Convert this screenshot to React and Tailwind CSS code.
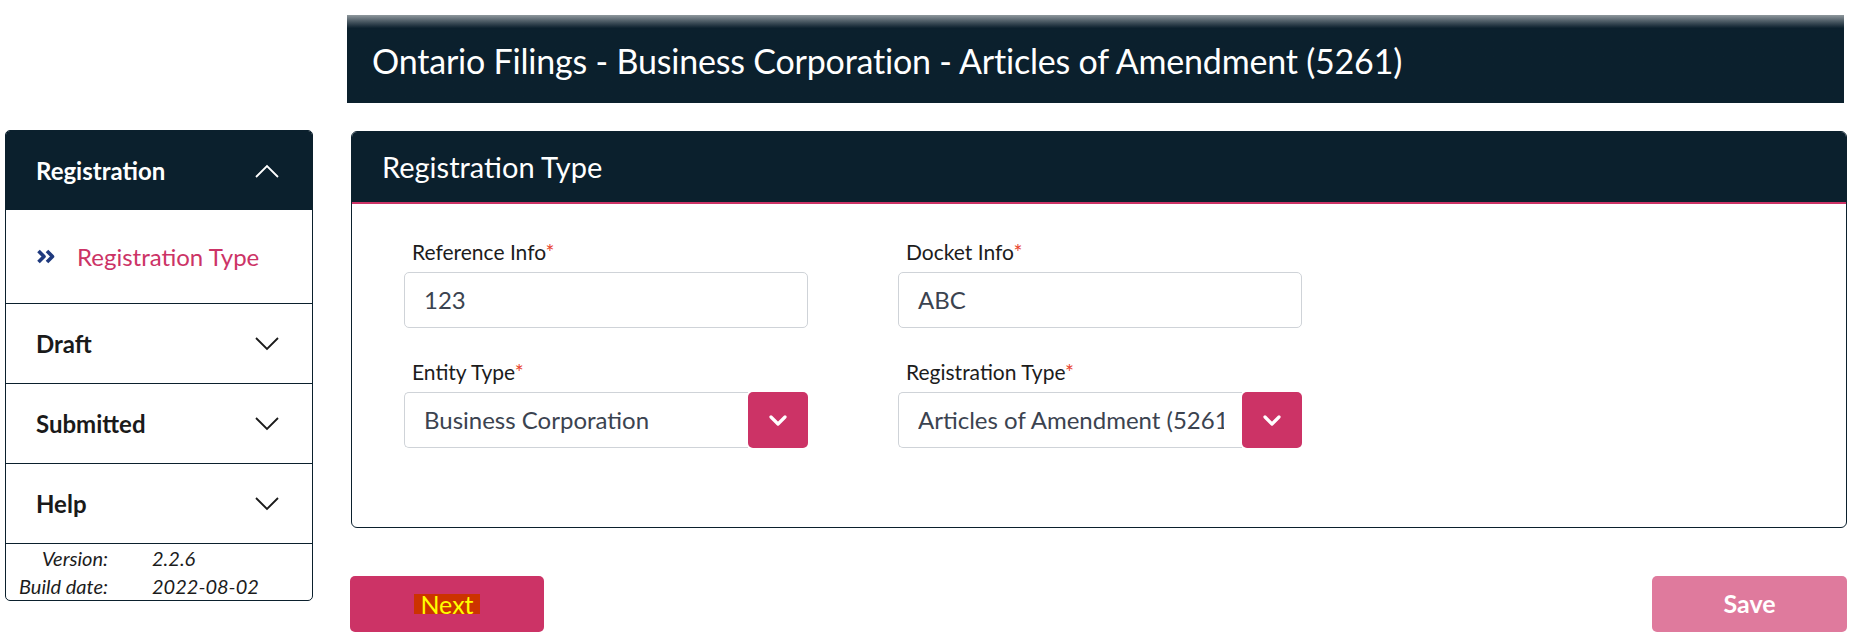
import { useState } from 'react';

const NAVY = 'bg-[#0b202d]';

const ChevronLine = ({ up = false }) => (
  <svg width="24" height="14" viewBox="0 0 24 14" fill="none" className="shrink-0">
    <polyline
      points={up ? '1,13 12,2 23,13' : '1,1 12,12 23,1'}
      stroke="currentColor"
      strokeWidth="1.8"
    />
  </svg>
);

const DoubleAngle = () => (
  <svg width="20" height="15" viewBox="0 0 20 15" fill="none" className="shrink-0">
    <polyline points="2.5,2 8,7.5 2.5,13" stroke="#1f3a7e" strokeWidth="3.6" strokeLinejoin="round" />
    <polyline points="11,2 16.5,7.5 11,13" stroke="#1f3a7e" strokeWidth="3.6" strokeLinejoin="round" />
  </svg>
);

const SelectChevron = () => (
  <svg width="18" height="11" viewBox="0 0 18 11" fill="none">
    <polyline points="2,2 9,9 16,2" stroke="white" strokeWidth="3.2" strokeLinecap="round" strokeLinejoin="round" />
  </svg>
);

const SideRow = ({ label }) => (
  <div className="h-[80px] flex items-center justify-between pl-[30px] pr-[33px] border-t border-[#0b202d] text-[#1a1a1a]">
    <span className="text-[24px] font-bold">{label}</span>
    <ChevronLine />
  </div>
);

const Label = ({ children }) => (
  <div className="text-[21px] text-[#1c1c1c] leading-[24px] mb-[8px] pl-[8px]">
    {children}
    <span className="text-[#e8442e]">*</span>
  </div>
);

const TextField = ({ label, value }) => (
  <div className="w-[404px]">
    <Label>{label}</Label>
    <div className="h-[56px] border border-[#cfd3d8] rounded-[5px] flex items-center px-[19px] text-[24px] text-[#3b4350]">
      {value}
    </div>
  </div>
);

const SelectField = ({ label, value }) => (
  <div className="w-[404px]">
    <Label>{label}</Label>
    <div className="h-[56px] flex">
      <div className="flex-1 min-w-0 border border-[#cfd3d8] border-r-0 rounded-l-[5px] flex items-center pl-[19px] pr-[18px] text-[24px] text-[#3b4350]">
        <div className="overflow-hidden whitespace-nowrap">{value}</div>
      </div>
      <div className="w-[60px] shrink-0 bg-[#cc3366] rounded-[5px] flex items-center justify-center">
        <SelectChevron />
      </div>
    </div>
  </div>
);

export default function App() {
  const [step] = useState('Registration Type');

  return (
    <div
      className="w-[1863px] h-[642px] bg-white flex gap-[34px] pl-[5px] pr-[16px]"
      style={{ fontFamily: 'Lato, "Open Sans", sans-serif' }}
    >
      <aside className="w-[308px] shrink-0 pt-[130px]">
        <div className="border border-[#0b202d] rounded-[5px] overflow-hidden">
          <div className={`${NAVY} h-[79px] flex items-center justify-between pl-[30px] pr-[33px] text-white`}>
            <span className="text-[24px] font-bold">Registration</span>
            <ChevronLine up />
          </div>
          <div className="h-[93px] flex items-center pl-[30px] gap-[21px]">
            <DoubleAngle />
            <span className="text-[24px] text-[#cc3366]">{step}</span>
          </div>
          <SideRow label="Draft" />
          <SideRow label="Submitted" />
          <SideRow label="Help" />
          <div className="border-t border-[#0b202d] text-[20px] italic text-[#1c1c1c] leading-[28px]">
            <div className="flex">
              <span className="w-[102px] text-right">Version:</span>
              <span className="ml-[44px]">2.2.6</span>
            </div>
            <div className="flex">
              <span className="w-[102px] text-right">Build date:</span>
              <span className="ml-[44px]">2022-08-02</span>
            </div>
          </div>
        </div>
      </aside>

      <main className="flex-1 flex flex-col">
        <div className="mt-[15px] h-[88px] mr-[3px] bg-gradient-to-b from-[#8f989d] via-[#0b202d] via-15% to-[#0b202d] flex items-center pl-[25px] pt-[2px]">
          <h1 className="text-[34px] text-white tracking-[-0.2px]">
            Ontario Filings - Business Corporation - Articles of Amendment (5261)
          </h1>
        </div>

        <section className="mt-[28px] ml-[4px] h-[397px] border border-[#0b202d] rounded-[6px] overflow-hidden">
          <div className={`${NAVY} h-[72px] flex items-center pl-[30px] border-b-2 border-[#cc3366]`}>
            <h2 className="text-[29px] text-white">Registration Type</h2>
          </div>
          <div className="pl-[52px] pt-[36px] grid grid-cols-[404px_404px] gap-x-[90px] gap-y-[32px]">
            <TextField label="Reference Info" value="123" />
            <TextField label="Docket Info" value="ABC" />
            <SelectField label="Entity Type" value="Business Corporation" />
            <SelectField label="Registration Type" value="Articles of Amendment (5261)" />
          </div>
        </section>

        <div className="mt-[48px] flex justify-between items-center">
          <button className="w-[194px] h-[56px] ml-[3px] bg-[#cc3366] rounded-[5px] flex items-center justify-center">
            <span className="bg-[#cc3300] text-[#ffff00] text-[25px] leading-[20px] px-[6px]">Next</span>
          </button>
          <button className="w-[195px] h-[56px] bg-[#df7a9d] rounded-[5px] text-white text-[25px] font-bold">
            Save
          </button>
        </div>
      </main>
    </div>
  );
}
